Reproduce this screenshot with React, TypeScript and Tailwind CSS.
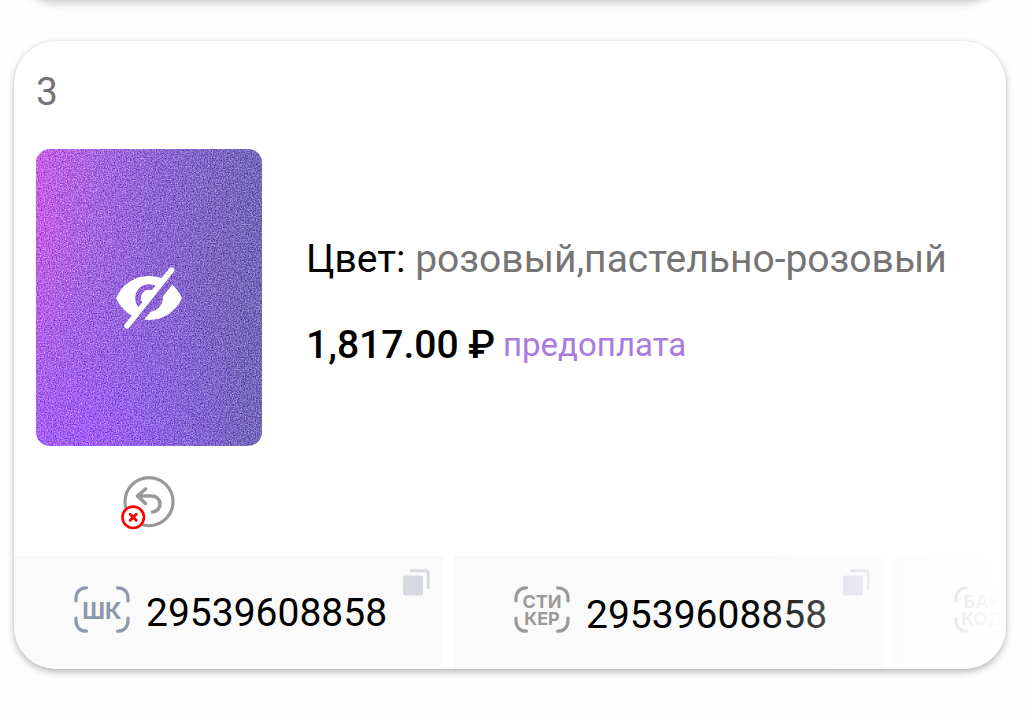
import React from "react";

type Code = {
  id: string;
  lines: string[];
  value: string;
  tone: string;
  box: string;
  align: string;
};

const codes: Code[] = [
  { id: "shk", lines: ["ШК"], value: "29539608858", tone: "text-[#8f97ad]", box: "h-[110px]", align: "pt-[1px]" },
  { id: "sticker", lines: ["СТИ", "КЕР"], value: "29539608858", tone: "text-[#9a9a9a]", box: "h-[113px]", align: "pt-[3px]" },
  { id: "barcode", lines: ["БАР", "КОД"], value: "29539608858", tone: "text-[#8f97ad]", box: "h-[110px]", align: "pt-[1px]" },
];

function ScanLabel({ lines, tone }: { lines: string[]; tone: string }) {
  const single = lines.length === 1;
  return (
    <span className={`grid h-[48px] w-[56px] shrink-0 place-items-center ${tone}`}>
      <svg
        viewBox="0 0 56 48"
        className="col-start-1 row-start-1 h-[48px] w-[56px]"
        fill="none"
        stroke="currentColor"
        strokeWidth="3.2"
        strokeLinecap="round"
        aria-hidden="true"
      >
        <path d="M2 15V12.500C2 5.500 6.500 1.800 12.500 1.800" />
        <path d="M43.500 1.800C49.500 1.800 54 5.500 54 12.500v2.500" />
        <path d="M2 32v2.500C2 41.500 6.500 45.200 12.500 45.200" />
        <path d="M43.500 45.200C49.500 45.200 54 41.500 54 34.500V32" />
      </svg>
      <span
        className={
          single
            ? "col-start-1 row-start-1 flex flex-col items-center pt-[2px] font-[Inter,sans-serif] text-[23px] leading-[24px] font-bold"
            : "col-start-1 row-start-1 flex flex-col items-center font-[Inter,sans-serif] text-[18px] leading-[17px] font-bold"
        }
      >
        {lines.map((l) => (
          <span key={l}>{l}</span>
        ))}
      </span>
    </span>
  );
}

function CopyIcon() {
  return (
    <svg viewBox="0 0 27 27" className="h-[27px] w-[27px]" aria-hidden="true">
      <rect x="0" y="6.500" width="20" height="20" rx="2.500" fill="#d6d9e2" />
      <path d="M8 1.800H22.500Q25.200 1.800 25.200 4.500V18.500" fill="none" stroke="#d6d9e2" strokeWidth="3" strokeLinecap="round" />
    </svg>
  );
}

function CodeTile({ code }: { code: Code }) {
  return (
    <div className={`relative flex w-[429px] shrink-0 items-start bg-[#fafafa] pt-[30px] pl-[60px] ${code.box}`}>
      <ScanLabel lines={code.lines} tone={code.tone} />
      <span className={`pl-4 text-[39px] leading-[52px] text-black ${code.align}`}>{code.value}</span>
      <button type="button" aria-label="Скопировать" className="absolute top-[13px] right-[13px]">
        <CopyIcon />
      </button>
    </div>
  );
}

function HiddenPhoto() {
  return (
    <button
      type="button"
      aria-label="Показать фото"
      className="grid h-[297px] w-[226px] place-items-center overflow-hidden rounded-[14px]"
    >
      <svg viewBox="0 0 226 297" className="h-full w-full" aria-hidden="true">
        <defs>
          <linearGradient id="base" x1="0" y1="0" x2="1" y2="0.1">
            <stop offset="0" stopColor="#c25ae2" />
            <stop offset="0.28" stopColor="#a062d9" />
            <stop offset="0.6" stopColor="#8461ca" />
            <stop offset="1" stopColor="#6d62b2" />
          </linearGradient>
          <radialGradient id="glow" gradientUnits="userSpaceOnUse" cx="50" cy="300" r="210">
            <stop offset="0" stopColor="#9c58fa" stopOpacity="0.85" />
            <stop offset="0.5" stopColor="#8e5cf0" stopOpacity="0.35" />
            <stop offset="1" stopColor="#825cd8" stopOpacity="0" />
          </radialGradient>
          <filter id="grain" x="0" y="0" width="1" height="1" colorInterpolationFilters="sRGB">
            <feTurbulence type="fractalNoise" baseFrequency="0.73" numOctaves="3" seed="4" result="n" />
            <feColorMatrix
              in="n"
              type="matrix"
              values="0.8 0 0 0 0.1  1 0 0 0 0  0.6 0 0 0 0.200  0 0 0 0 1"
              result="g"
            />
            <feComposite in="SourceGraphic" in2="g" operator="arithmetic" k1="0" k2="1" k3="0.7" k4="-0.33" />
          </filter>
          <mask id="eyeCut">
            <rect width="226" height="297" fill="#fff" />
            <circle cx="113" cy="149" r="11" fill="none" stroke="#000" strokeWidth="5.600" />
            <path d="M97 179L142 123" stroke="#000" strokeWidth="7" />
          </mask>
        </defs>
        <g filter="url(#grain)">
          <rect width="226" height="297" fill="url(#base)" />
          <rect width="226" height="297" fill="url(#glow)" />
        </g>
        <path
          mask="url(#eyeCut)"
          d="M80 149C86 136 98 127 113 127S140 136 146 149C140 162 128 171 113 171S86 162 80 149Z"
          fill="#fff"
        />
        <path d="M91 177L135.500 121" stroke="#fff" strokeWidth="5.400" strokeLinecap="round" />
      </svg>
    </button>
  );
}

function NoReturnIcon() {
  return (
    <svg viewBox="0 0 56 56" className="h-[56px] w-[56px]" fill="none" role="img" aria-label="Возврат недоступен">
      <circle cx="28" cy="27.700" r="24" stroke="#999" strokeWidth="3.200" />
      <path
        d="M24.500 15L16.500 22L24.500 29.500M17 22H30.500A7.900 7.900 0 0 1 31.500 38"
        stroke="#999"
        strokeWidth="3.600"
        strokeLinecap="round"
        strokeLinejoin="round"
      />
      <circle cx="12.200" cy="43.300" r="10.700" fill="#fff" stroke="#ff0000" strokeWidth="2.600" />
      <path d="M9.200 40.300L15.200 46.300M15.200 40.300L9.200 46.300" stroke="#ff0000" strokeWidth="2.900" strokeLinecap="round" />
    </svg>
  );
}

export default function App() {
  return (
    <main className="overflow-hidden bg-[#fefefe] pr-[23px] pb-[49px] pl-[14px] font-[Roboto,sans-serif]">
      <div className="-mt-[100px] h-[100px] rounded-[42px] bg-white shadow-[0_3px_8px_rgba(0,0,0,0.22)]" />

      <article className="mt-[41px] overflow-hidden rounded-[42px] bg-white shadow-[0_3px_7px_rgba(0,0,0,0.28),0_0_1px_rgba(0,0,0,0.2)]">
        <h2 className="px-[22px] pt-[27px] text-[39px] leading-[48px] text-[#757575]">3</h2>

        <div className="mt-[33px] flex gap-11 px-[22px]">
          <div className="flex shrink-0 flex-col items-center">
            <HiddenPhoto />
            <div className="pt-7 pb-[26px]">
              <NoReturnIcon />
            </div>
          </div>

          <div className="flex flex-col gap-[38px] pt-[86px]">
            <p className="text-[39px] leading-[48px] whitespace-nowrap text-[#757575]">
              <span className="text-black">Цвет:</span> розовый,пастельно-розовый
            </p>
            <p className="flex items-center gap-2 leading-[48px] whitespace-nowrap">
              <span className="text-[39px] font-medium text-black">1,817.00 ₽</span>
              <span className="text-[33px] text-[#a97be0]">предоплата</span>
            </p>
          </div>
        </div>

        <div className="relative overflow-hidden">
          <div className="flex h-[113px] gap-[11px]">
            {codes.map((c) => (
              <CodeTile key={c.id} code={c} />
            ))}
          </div>
          <div className="pointer-events-none absolute inset-y-0 right-0 w-64 bg-linear-to-r from-white/0 to-white" />
        </div>
      </article>
    </main>
  );
}
